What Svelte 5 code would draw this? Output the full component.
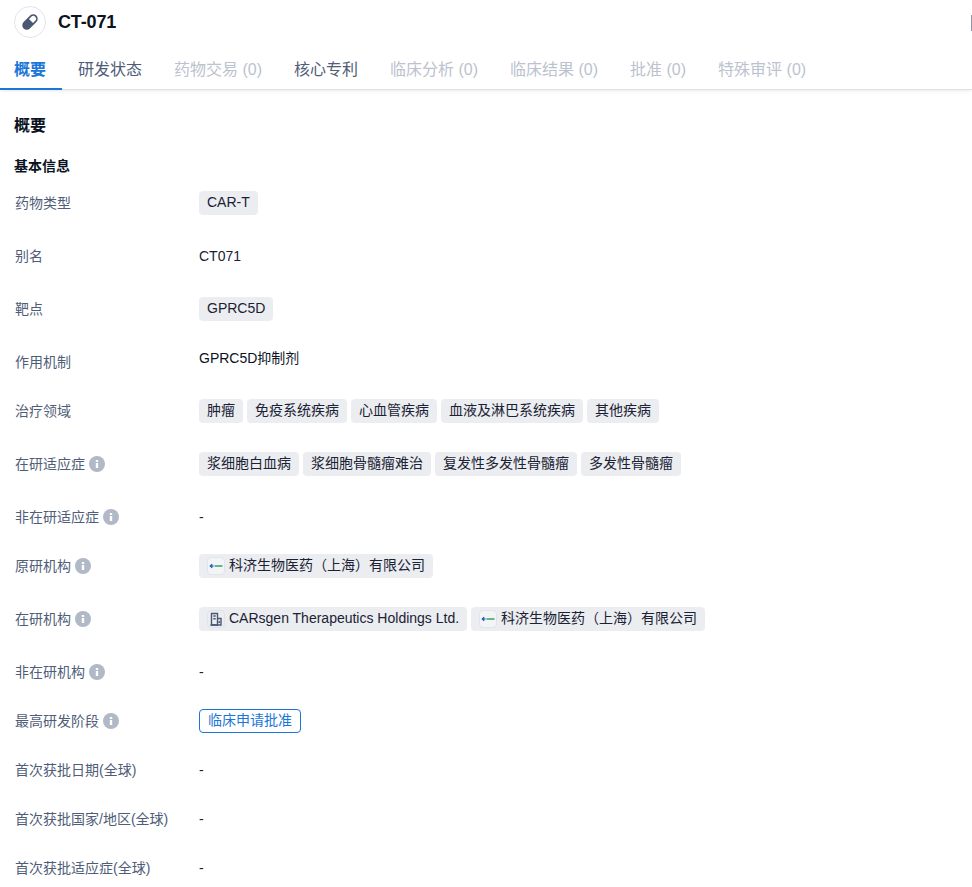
<script>
  const tabs = [
    { label: '概要', active: true },
    { label: '研发状态' },
    { label: '药物交易 (0)', off: true },
    { label: '核心专利' },
    { label: '临床分析 (0)', off: true },
    { label: '临床结果 (0)', off: true },
    { label: '批准 (0)', off: true },
    { label: '特殊审评 (0)', off: true }
  ];

  const jw = '科济生物医药（上海）有限公司';

  const rows = [
    { label: '药物类型', tags: ['CAR-T'], h: 53 },
    { label: '别名', text: 'CT071', h: 53 },
    { label: '靶点', tags: ['GPRC5D'], h: 53 },
    { label: '作用机制', mech: 'GPRC5D抑制剂', h: 49 },
    { label: '治疗领域', tags: ['肿瘤', '免疫系统疾病', '心血管疾病', '血液及淋巴系统疾病', '其他疾病'], h: 53 },
    { label: '在研适应症', info: true, tags: ['浆细胞白血病', '浆细胞骨髓瘤难治', '复发性多发性骨髓瘤', '多发性骨髓瘤'], h: 53 },
    { label: '非在研适应症', info: true, text: '-', h: 49 },
    { label: '原研机构', info: true, orgs: [{ name: jw, logo: true }], h: 53 },
    { label: '在研机构', info: true, orgs: [{ name: 'CARsgen Therapeutics Holdings Ltd.' }, { name: jw, logo: true }], h: 53 },
    { label: '非在研机构', info: true, text: '-', h: 49 },
    { label: '最高研发阶段', info: true, phase: '临床申请批准', h: 49 },
    { label: '首次获批日期(全球)', text: '-', h: 49 },
    { label: '首次获批国家/地区(全球)', text: '-', h: 49 },
    { label: '首次获批适应症(全球)', text: '-', h: 31 }
  ];
</script>

<div class="page">
  <header class="top">
    <div class="avatar">
      <svg width="20" height="20" viewBox="0 0 20 20">
        <g transform="rotate(-45 10 10)">
          <rect x="1.8" y="6.4" width="16.4" height="7.2" rx="3.6" fill="#fff" stroke="#4a5874" stroke-width="1.7" />
          <path d="M11.4 6.4H5.4a3.6 3.6 0 0 0 0 7.2h6z" fill="#4a5874" />
        </g>
      </svg>
    </div>
    <h1>CT-071</h1>
    <span class="edge"></span>
  </header>

  <nav class="tabs">
    {#each tabs as t}
      <span class="tab" class:active={t.active} class:off={t.off}>{t.label}</span>
    {/each}
  </nav>

  <main>
    <h2>概要</h2>
    <h3>基本信息</h3>
    {#each rows as r}
      <div class="row" style="height: {r.h}px">
        <div class="label">
          {r.label}
          {#if r.info}
            <svg class="info" width="16" height="16" viewBox="0 0 16 16">
              <circle cx="8" cy="8" r="8" fill="#b1b8c6" />
              <rect x="6.8" y="7" width="2.4" height="5" fill="#fff" />
              <rect x="6.8" y="4" width="2.4" height="2" fill="#fff" />
            </svg>
          {/if}
        </div>
        <div class="value">
          {#if r.tags}
            {#each r.tags as tag}
              <span class="tag">{tag}</span>
            {/each}
          {:else if r.orgs}
            {#each r.orgs as org}
              <span class="tag org">
                <span class="logo" class:light={org.logo}>
                  {#if org.logo}
                    <svg width="16" height="16" viewBox="0 0 16 16">
                      <path d="M2.5 8h3" stroke="#2450c4" stroke-width="1.3" />
                      <path d="M4.2 6.2 2.3 8l1.9 1.8" fill="none" stroke="#2450c4" stroke-width="1.2" />
                      <path d="M6.5 8h8" stroke="#5cbb88" stroke-width="2" />
                    </svg>
                  {:else}
                    <svg width="16" height="16" viewBox="0 0 16 16" fill="none" stroke="#4a5874" stroke-width="1.4">
                      <path d="M3.5 14V2.5h6V14z" />
                      <path d="M9.5 7.5h3.5V14H2.5" />
                      <path d="M5.3 5h2.4M5.3 7.8h2.4M11.2 10v2" />
                    </svg>
                  {/if}
                </span>
                {org.name}
              </span>
            {/each}
          {:else if r.phase}
            <span class="phase">{r.phase}</span>
          {:else if r.mech}
            <span class="mech">{r.mech}</span>
          {:else}
            <span class="plain">{r.text}</span>
          {/if}
        </div>
      </div>
    {/each}
  </main>
</div>

<style>
  :global(body) {
    background: #fff;
    overflow: hidden;
  }
  .page {
    width: 972px;
    height: 887px;
    overflow: hidden;
    font-family: "Liberation Sans", "Noto Sans CJK SC", sans-serif;
    font-size: 14px;
    color: #1a2233;
  }
  .top {
    height: 48px;
    box-sizing: border-box;
    padding: 6px 0 0 14px;
    display: flex;
    align-items: flex-start;
    gap: 12px;
  }
  .avatar {
    width: 32px;
    height: 32px;
    box-sizing: border-box;
    border: 1px solid #e1e4ea;
    border-radius: 50%;
    display: flex;
    align-items: center;
    justify-content: center;
  }
  h1 {
    margin: 0;
    font-size: 18px;
    line-height: 32px;
    font-weight: 700;
    color: #0b1221;
    letter-spacing: -0.15px;
  }
  .edge {
    width: 1px;
    height: 16px;
    margin: 9px 0 0 auto;
    background: #8d96aa;
  }
  .tabs {
    height: 42px;
    display: flex;
    font-size: 16px;
    box-shadow: inset 0 -1px 0 #dfe1e6, 0 2px 3px -1px rgba(30, 40, 60, 0.1);
  }
  .tab {
    padding: 0 16px;
    line-height: 44px;
    height: 42px;
    box-sizing: border-box;
    color: #4f5d78;
  }
  .tab:first-child {
    padding-left: 14px;
  }
  .tab.off {
    color: #bcc2ce;
  }
  .tab.active {
    color: #1a76d8;
    font-weight: 700;
    border-bottom: 2px solid #1a76d8;
  }
  main {
    padding: 24px 14px 0;
  }
  h2 {
    margin: 0;
    font-size: 16px;
    line-height: 24px;
    font-weight: 700;
    color: #0b1221;
  }
  h3 {
    margin: 17px 0 14px;
    font-size: 14px;
    line-height: 22px;
    font-weight: 700;
    color: #0b1221;
  }
  .row {
    display: flex;
    align-items: flex-start;
  }
  .label {
    width: 184px;
    padding-left: 1px;
    flex: none;
    line-height: 24px;
    color: #4f5d78;
    display: flex;
    align-items: center;
    gap: 4px;
  }
  .value {
    display: flex;
    flex-wrap: wrap;
    gap: 4px;
  }
  .tag {
    height: 24px;
    line-height: 22px;
    padding: 0 8px;
    border-radius: 4px;
    background: #ebedf1;
    color: #1a2233;
    white-space: nowrap;
  }
  .org {
    display: flex;
    align-items: flex-start;
    gap: 4px;
  }
  .logo {
    width: 18px;
    height: 18px;
    margin-top: 3px;
    box-sizing: border-box;
    border: 1px solid #e1e4ea;
    border-radius: 4px;
    display: flex;
    align-items: center;
    justify-content: center;
  }
  .logo.light {
    background: #f3f4f6;
  }
  .plain {
    line-height: 24px;
  }
  .mech {
    line-height: 16px;
    color: #0b1221;
  }
  .phase {
    height: 24px;
    box-sizing: border-box;
    line-height: 20px;
    padding: 0 8px;
    border: 1px solid #1a76d8;
    border-radius: 4px;
    color: #1a76d8;
  }
</style>
